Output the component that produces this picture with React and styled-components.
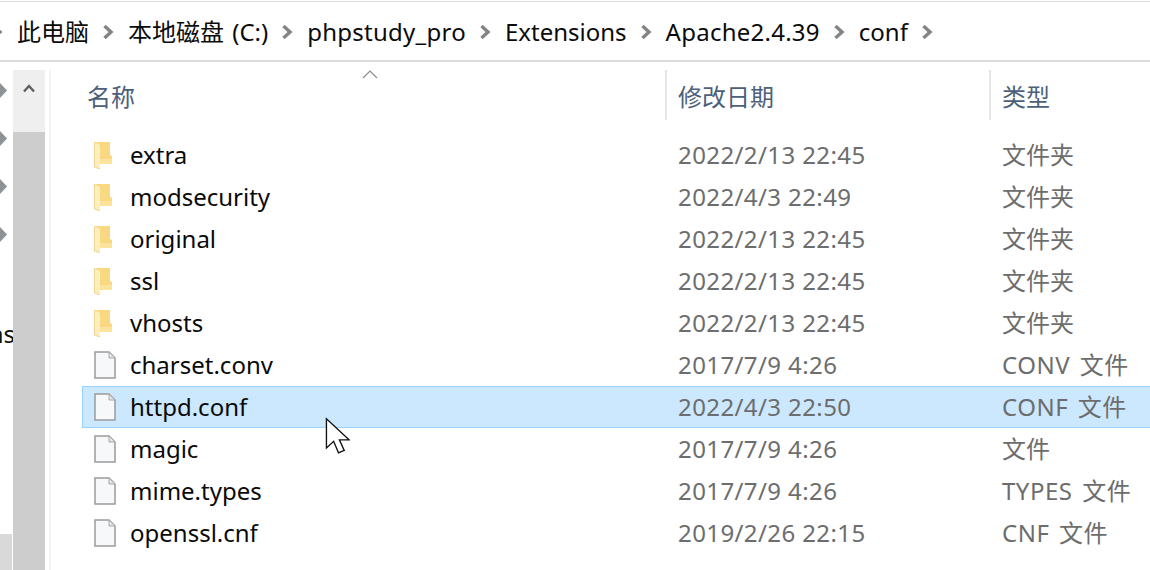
import React from 'react';
import styled, {createGlobalStyle} from 'styled-components';

const GlobalStyle = createGlobalStyle`
  html, body { margin: 0; padding: 0; background: #fff; }
  body { font-family: "Noto Sans", "Noto Sans CJK SC", sans-serif; overflow: hidden; }
`;

const Window = styled.div`
  width: 1150px;
  height: 570px;
  overflow: hidden;
  display: flex;
  flex-direction: column;
  background: #fff;
`;
const AddressBar = styled.div`
  height: 58px;
  margin-top: 1px;
  border-top: 1px solid #dedede;
  border-bottom: 2px solid #dcdcdc;
  box-sizing: content-box;
  display: flex;
  align-items: center;
  flex: none;
`;
const Crumb = styled.span`
  font-size: 24px;
  line-height: 32px;
  margin-top: 1px;
  color: #0b0b0b;
  white-space: nowrap;
  letter-spacing: ${p => p.$spacing || 0}px;
  word-spacing: 2px;
`;
const Chevron = styled.svg`
  width: 12px;
  height: 14px;
  flex: none;
  margin: 2px 14px 0 ${p => p.$left}px;
`;
const Body = styled.div`
  flex: 1;
  display: flex;
  min-height: 0;
`;
const NavPane = styled.div`
  width: 13px;
  flex: none;
  position: relative;
  overflow: hidden;
  display: flex;
  flex-direction: column;
  padding-top: 21px;
  gap: 33px;
`;
const NavArrow = styled.svg`
  width: 7px;
  height: 15px;
  display: block;
`;
const NavCut = styled.span`
  position: absolute;
  left: -14px;
  top: 256px;
  width: 29px;
  font-size: 24px;
  line-height: 32px;
  color: #111;
  direction: rtl;
  white-space: nowrap;
`;
const NavFooter = styled.div`
  position: absolute;
  left: 0;
  right: 1px;
  bottom: 0;
  height: 36px;
  background: #d9d9d9;
`;
const Scrollbar = styled.div`
  width: 32px;
  flex: none;
  margin-top: 8px;
  display: flex;
  flex-direction: column;
`;
const ScrollButton = styled.div`
  height: 62px;
  background: #efefef;
  display: flex;
  justify-content: center;
  padding-top: 14px;
  box-sizing: border-box;
`;
const ScrollThumb = styled.div`
  flex: 1;
  background: #cdcdcd;
`;
const Divider = styled.div`
  width: 2px;
  flex: none;
  margin: 8px 0 0 4px;
  background: #f3f3f3;
`;
const Content = styled.div`
  flex: 1;
  position: relative;
  padding: 8px 0 0 31px;
`;
const SortArrow = styled.svg`
  position: absolute;
  left: 311px;
  top: 8px;
  width: 16px;
  height: 9px;
`;
const Header = styled.div`
  display: grid;
  grid-template-columns: 583px 324px 1fr;
  height: 50px;
  margin-bottom: 14px;
`;
const HeaderCell = styled.div`
  height: 50px;
  font-size: 24px;
  line-height: 54px;
  color: #4c607a;
  padding-left: ${p => p.$pad}px;
  border-left: ${p => (p.$line ? '2px solid #e5e5e5' : 'none')};
  box-sizing: border-box;
`;
const Row = styled.div`
  display: grid;
  grid-template-columns: 583px 324px 1fr;
  height: 42px;
  box-sizing: border-box;
  align-items: center;
  background: ${p => (p.$selected ? '#cce8ff' : 'transparent')};
  border: 1px solid ${p => (p.$selected ? '#99d1ff' : 'transparent')};
  border-right: 0;
`;
const NameCell = styled.div`
  display: flex;
  align-items: center;
  padding-left: 11px;
`;
const FileName = styled.span`
  font-size: 24px;
  line-height: 32px;
  color: #0a0a0a;
  margin-left: 14px;
  white-space: nowrap;
`;
const MetaCell = styled.span`
  font-size: 24px;
  line-height: 32px;
  color: #6d6d6d;
  white-space: nowrap;
  padding-left: 12px;
`;
const DateCell = styled(MetaCell)`
  letter-spacing: 0.4px;
`;
const TypeCell = styled(MetaCell)`
  word-spacing: ${p => (p.$ext ? 3 : 0)}px;
  letter-spacing: ${p => (p.$ext ? 0.5 : 0)}px;
`;
const IconBox = styled.svg`
  width: 22px;
  height: 28px;
  flex: none;
  display: block;
`;
const Cursor = styled.svg`
  position: absolute;
  left: 274px;
  top: 355px;
  width: 25px;
  height: 39px;
`;

const crumbs = [
  {label: '此电脑'},
  {label: '本地磁盘 (C:)'},
  {label: 'phpstudy_pro', spacing: 0.25},
  {label: 'Extensions'},
  {label: 'Apache2.4.39', spacing: 0.25},
  {label: 'conf'},
];

const files = [
  {name: 'extra', date: '2022/2/13 22:45', type: '文件夹', folder: true},
  {name: 'modsecurity', date: '2022/4/3 22:49', type: '文件夹', folder: true},
  {name: 'original', date: '2022/2/13 22:45', type: '文件夹', folder: true},
  {name: 'ssl', date: '2022/2/13 22:45', type: '文件夹', folder: true},
  {name: 'vhosts', date: '2022/2/13 22:45', type: '文件夹', folder: true},
  {name: 'charset.conv', date: '2017/7/9 4:26', type: 'CONV 文件'},
  {name: 'httpd.conf', date: '2022/4/3 22:50', type: 'CONF 文件', selected: true},
  {name: 'magic', date: '2017/7/9 4:26', type: '文件'},
  {name: 'mime.types', date: '2017/7/9 4:26', type: 'TYPES 文件'},
  {name: 'openssl.cnf', date: '2019/2/26 22:15', type: 'CNF 文件'},
];

const ChevronIcon = ({left = 13}) => (
  <Chevron viewBox="0 0 12 14" $left={left}>
    <path d="M2.5 1 L9 7 L2.5 13" fill="none" stroke="#848484" strokeWidth="3.4"/>
  </Chevron>
);

const FolderIcon = () => (
  <IconBox viewBox="0 0 22 28">
    <path d="M1 1 H16 V14 L18 15 V23 H6 V27 L0 25 V1 Z" fill="#f8d982"/>
    <path d="M6 18 H18 V23 H6 Z" fill="#fbe39c"/>
    <path d="M0 1 L6 4 V28 L0 26 Z" fill="#fdeebb"/>
    <path d="M0.4 1 V26 L6 28" fill="none" stroke="#e8cb80" strokeWidth="0.8"/>
  </IconBox>
);

const FileIcon = () => (
  <IconBox viewBox="0 0 22 28">
    <path d="M1 1 H15 L21 7 V27 H1 Z" fill="#f7f8f9" stroke="#9a9a9a" strokeWidth="1.5"/>
    <path d="M15 1 V7 H21 Z" fill="#e4e4e4" stroke="#a8a8a8" strokeWidth="1"/>
  </IconBox>
);

const App = () => {
  return (
    <Window>
      <GlobalStyle/>
      <AddressBar>
        <ChevronIcon left={-9}/>
        {crumbs.map(c => (
          <React.Fragment key={c.label}>
            <Crumb $spacing={c.spacing}>{c.label}</Crumb>
            <ChevronIcon/>
          </React.Fragment>
        ))}
      </AddressBar>
      <Body>
        <NavPane>
          {[0, 1, 2, 3].map(i => (
            <NavArrow key={i} viewBox="0 0 7 15">
              <path d="M0 0 L7 7.5 L0 15 Z" fill="#8f9396"/>
            </NavArrow>
          ))}
          <NavCut>ns</NavCut>
          <NavFooter/>
        </NavPane>
        <Scrollbar>
          <ScrollButton>
            <svg width="12" height="9" viewBox="0 0 12 9">
              <path d="M1 7.5 L6 2 L11 7.5" fill="none" stroke="#5f5f5f" strokeWidth="2.4"/>
            </svg>
          </ScrollButton>
          <ScrollThumb/>
        </Scrollbar>
        <Divider/>
        <Content>
          <SortArrow viewBox="0 0 16 9">
            <path d="M1 8 L8 1 L15 8" fill="none" stroke="#8c8c8c" strokeWidth="1.2"/>
          </SortArrow>
          <Header>
            <HeaderCell $pad={5}>名称</HeaderCell>
            <HeaderCell $line $pad={11}>修改日期</HeaderCell>
            <HeaderCell $line $pad={11}>类型</HeaderCell>
          </Header>
          {files.map(f => (
            <Row key={f.name} $selected={f.selected}>
              <NameCell>
                {f.folder ? <FolderIcon/> : <FileIcon/>}
                <FileName>{f.name}</FileName>
              </NameCell>
              <DateCell>{f.date}</DateCell>
              <TypeCell $ext={f.type.includes(' ')}>{f.type}</TypeCell>
            </Row>
          ))}
          <Cursor viewBox="0 0 26 40">
            <path d="M1.5 1.5 V32 L9 25 L14 37 L20 34.5 L15 23.5 L25 23.5 Z" fill="#fff" stroke="#111" strokeWidth="1.4"/>
          </Cursor>
        </Content>
      </Body>
    </Window>
  );
};

export default App;
